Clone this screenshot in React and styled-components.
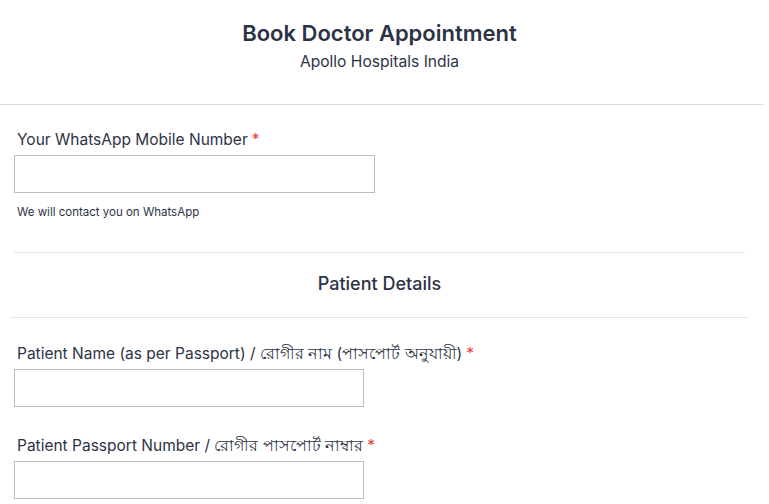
import styled, { createGlobalStyle } from 'styled-components';

const Global = createGlobalStyle`
  body {
    margin: 0;
    background: #fff;
    font-family: Inter, "Noto Sans", sans-serif;
    color: #2c3345;
  }
`

const Page = styled.div`
  width: 764px;
`

const Header = styled.div`
  height: 105px;
  border-bottom: 1px solid #dcdce4;
  display: flex;
  flex-direction: column;
  align-items: center;
  padding: 20px 5px 0 0;
  box-sizing: border-box;
`

const Title = styled.h1`
  margin: 0;
  font-size: 22px;
  font-weight: 600;
  line-height: 27px;
`

const Subtitle = styled.div`
  margin-top: 5px;
  font-size: 15.6px;
  line-height: 20px;
`

const Field = styled.div`
  padding: ${p => p.$pad || '0 0 0 14px'};
`

const Label = styled.label`
  display: block;
  font-size: 15.5px;
  line-height: 20px;
  font-weight: 400;
  padding-left: 3px;
  margin-bottom: 5px;
`

const Star = styled.span`
  color: #f23a3c;
  margin-left: 4px;
`

const Input = styled.input`
  display: block;
  box-sizing: border-box;
  width: ${p => p.$w}px;
  height: 38px;
  border: 1px solid #b8bdc9;
  background: #fff;
  margin: 0;
  padding: 0 10px;
  font: inherit;
`

const Help = styled.div`
  font-size: 11.5px;
  line-height: 14px;
  color: #2c3345;
  padding-left: 3px;
  margin-top: 12px;
`

const Divider = styled.hr`
  border: 0;
  border-top: 1px solid #e6e6e6;
  margin: ${p => p.$m};
`

const Section = styled.div`
  text-align: center;
  font-size: 18px;
  font-weight: 500;
  line-height: 22px;
  padding: 20px 5px 22px 0;
`

export default function App() {
  return (
    <Page>
      <Global />
      <Header>
        <Title>Book Doctor Appointment</Title>
        <Subtitle>Apollo Hospitals India</Subtitle>
      </Header>
      <Field $pad="25px 0 0 14px">
        <Label>Your WhatsApp Mobile Number<Star>*</Star></Label>
        <Input $w={361} />
        <Help>We will contact you on WhatsApp</Help>
      </Field>
      <Divider $m="33px 19px 0 14px" />
      <Section>Patient Details</Section>
      <Divider $m="0 15px 0 10px" />
      <Field $pad="26px 0 0 14px">
        <Label>Patient Name (as per Passport) / রোগীর নাম (পাসপোর্ট অনুযায়ী)<Star>*</Star></Label>
        <Input $w={350} />
      </Field>
      <Field $pad="29px 0 0 14px">
        <Label>Patient Passport Number / রোগীর পাসপোর্ট নাম্বার<Star>*</Star></Label>
        <Input $w={350} />
      </Field>
    </Page>
  )
}
